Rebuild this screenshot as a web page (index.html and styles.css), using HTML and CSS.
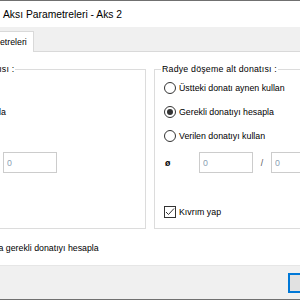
FILE: index.html
```html
<!DOCTYPE html>
<html lang="tr">

<head>
    <meta charset="UTF-8">
    <title>Radye Aksı Parametreleri</title>
    <link rel="stylesheet" href="styles.css">
</head>

<body>
    <div class="window">
        <div class="titlebar">Aksı Parametreleri - Aks 2</div>

        <!-- Sekmeler -->
        <div class="tabs">
            <div class="tab">Parametreleri</div>
        </div>

        <div class="page">
            <div class="groups">
                <!-- Üst donatı -->
                <fieldset class="group group-left">
                    <legend>Radye döşeme üst donatısı :</legend>
                    <label class="radio-row"><span class="radio"></span>Minimum donatı</label>
                    <label class="radio-row"><span class="radio checked"></span>Gerekli donatıyı hesapla</label>
                    <label class="radio-row"><span class="radio"></span>Verilen</label>
                    <div class="bar-row">
                        <span class="phi">ø</span>
                        <input class="num" type="text" value="0" disabled>
                        <span class="slash">/</span>
                        <input class="num" type="text" value="0" disabled>
                    </div>
                    <label class="check-row"><span class="check"></span>Kıvrım yap</label>
                </fieldset>

                <!-- Alt donatı -->
                <fieldset class="group">
                    <legend>Radye döşeme alt donatısı :</legend>
                    <label class="radio-row"><span class="radio"></span>Üstteki donatı aynen kullan</label>
                    <label class="radio-row"><span class="radio checked"></span>Gerekli donatıyı hesapla</label>
                    <label class="radio-row"><span class="radio"></span>Verilen donatıyı kullan</label>
                    <div class="bar-row">
                        <span class="phi">ø</span>
                        <input class="num" type="text" value="0" disabled>
                        <span class="slash">/</span>
                        <input class="num" type="text" value="0" disabled>
                    </div>
                    <label class="check-row">
                        <span class="check checked">
                            <svg width="10" height="10" viewBox="0 0 10 10" fill="none" stroke="#333" stroke-width="1">
                                <polyline points="1,5 3.5,7.5 9,1.5"></polyline>
                            </svg>
                        </span>
                        Kıvrım yap
                    </label>
                </fieldset>
            </div>

            <label class="bottom-row">Yalnızca bu aksa gerekli donatıyı hesapla</label>
        </div>

        <div class="footer">
            <button class="btn btn-default">Tamam</button>
        </div>
    </div>
</body>

</html>
```

FILE: styles.css
```css
/* Genel */
body {
    margin: 0;
    width: 300px;
    height: 300px;
    overflow: hidden;
    font-family: 'Liberation Sans', Arial, sans-serif;
    font-size: 8.8px;
    color: #000;
    background: #fff;
}

.window {
    height: 300px;
    box-sizing: border-box;
    border-top: 1px solid #707070;
    border-bottom: 1px solid #707070;
    display: flex;
    flex-direction: column;
    background: #fff;
}

.titlebar {
    height: 26px;
    display: flex;
    align-items: center;
    padding-left: 3px;
    font-size: 10.3px;
    white-space: nowrap;
}

/* Sekmeler */
.tabs {
    height: 24px;
    background: #f0f0f0;
    border-bottom: 1px solid #d9d9d9;
    display: flex;
    align-items: flex-end;
}

.tab {
    height: 20px;
    margin-bottom: -1px;
    margin-left: -29px;
    padding: 0 6px 0 3px;
    background: #fff;
    border-top: 1px solid #d9d9d9;
    border-right: 1px solid #d9d9d9;
    display: flex;
    align-items: center;
    white-space: nowrap;
}

.page {
    flex: 1;
    padding-top: 12px;
    background: #fff;
}

.groups {
    display: flex;
    gap: 8px;
}

/* Grup kutuları */
.group {
    flex: none;
    width: 250px;
    box-sizing: border-box;
    margin: 0;
    padding: 0 0 10px 8px;
    border: 1px solid #dcdcdc;
    white-space: nowrap;
}

.group-left {
    margin-left: -114px;
    width: 260px;
}

.group legend {
    margin-left: -2px;
    padding: 0 1px;
    line-height: 11px;
    letter-spacing: 0.2px;
}

.group-left legend {
    margin-left: 1px;
}

.radio-row {
    height: 24px;
    display: flex;
    align-items: center;
}

.radio-row:first-of-type {
    margin-top: 1px;
}

.radio {
    width: 12px;
    height: 12px;
    box-sizing: border-box;
    margin-left: 1px;
    margin-right: 3px;
    border: 1px solid #333;
    border-radius: 50%;
    display: flex;
    align-items: center;
    justify-content: center;
}

.radio.checked::after {
    content: '';
    width: 6px;
    height: 6px;
    border-radius: 50%;
    background: #333;
}

.bar-row {
    margin-top: 4px;
    height: 21px;
    display: flex;
    align-items: center;
}

.phi {
    width: 34px;
    padding-left: 2px;
    font-weight: bold;
}

.num {
    width: 54px;
    height: 21px;
    box-sizing: border-box;
    margin: 0;
    padding: 0 3px;
    border: 1px solid #cccccc;
    background: #fff;
    font-family: inherit;
    font-size: 8.8px;
    color: #8d9fb3;
}

.slash {
    width: 18px;
    text-align: center;
    color: #555;
}

.check-row {
    margin-top: 33px;
    height: 12px;
    display: flex;
    align-items: center;
    gap: 3px;
}

.check {
    width: 12px;
    height: 12px;
    box-sizing: border-box;
    margin-left: 1px;
    border: 1px solid #333;
    display: flex;
    align-items: center;
    justify-content: center;
}

.bottom-row {
    display: block;
    margin-top: 13px;
    margin-left: -63px;
    line-height: 12px;
    white-space: nowrap;
}

/* Alt çubuk */
.footer {
    height: 33px;
    background: #f0f0f0;
    border-top: 1px solid #e6e6e6;
    display: flex;
    align-items: flex-start;
}

.btn {
    flex: none;
    width: 75px;
    height: 20px;
    margin-top: 7px;
    margin-left: 288px;
    border: 1px solid #adadad;
    background: #e1e1e1;
    font-family: inherit;
    font-size: 8.8px;
}

.btn-default {
    border: 2px solid #0078d7;
}
```
